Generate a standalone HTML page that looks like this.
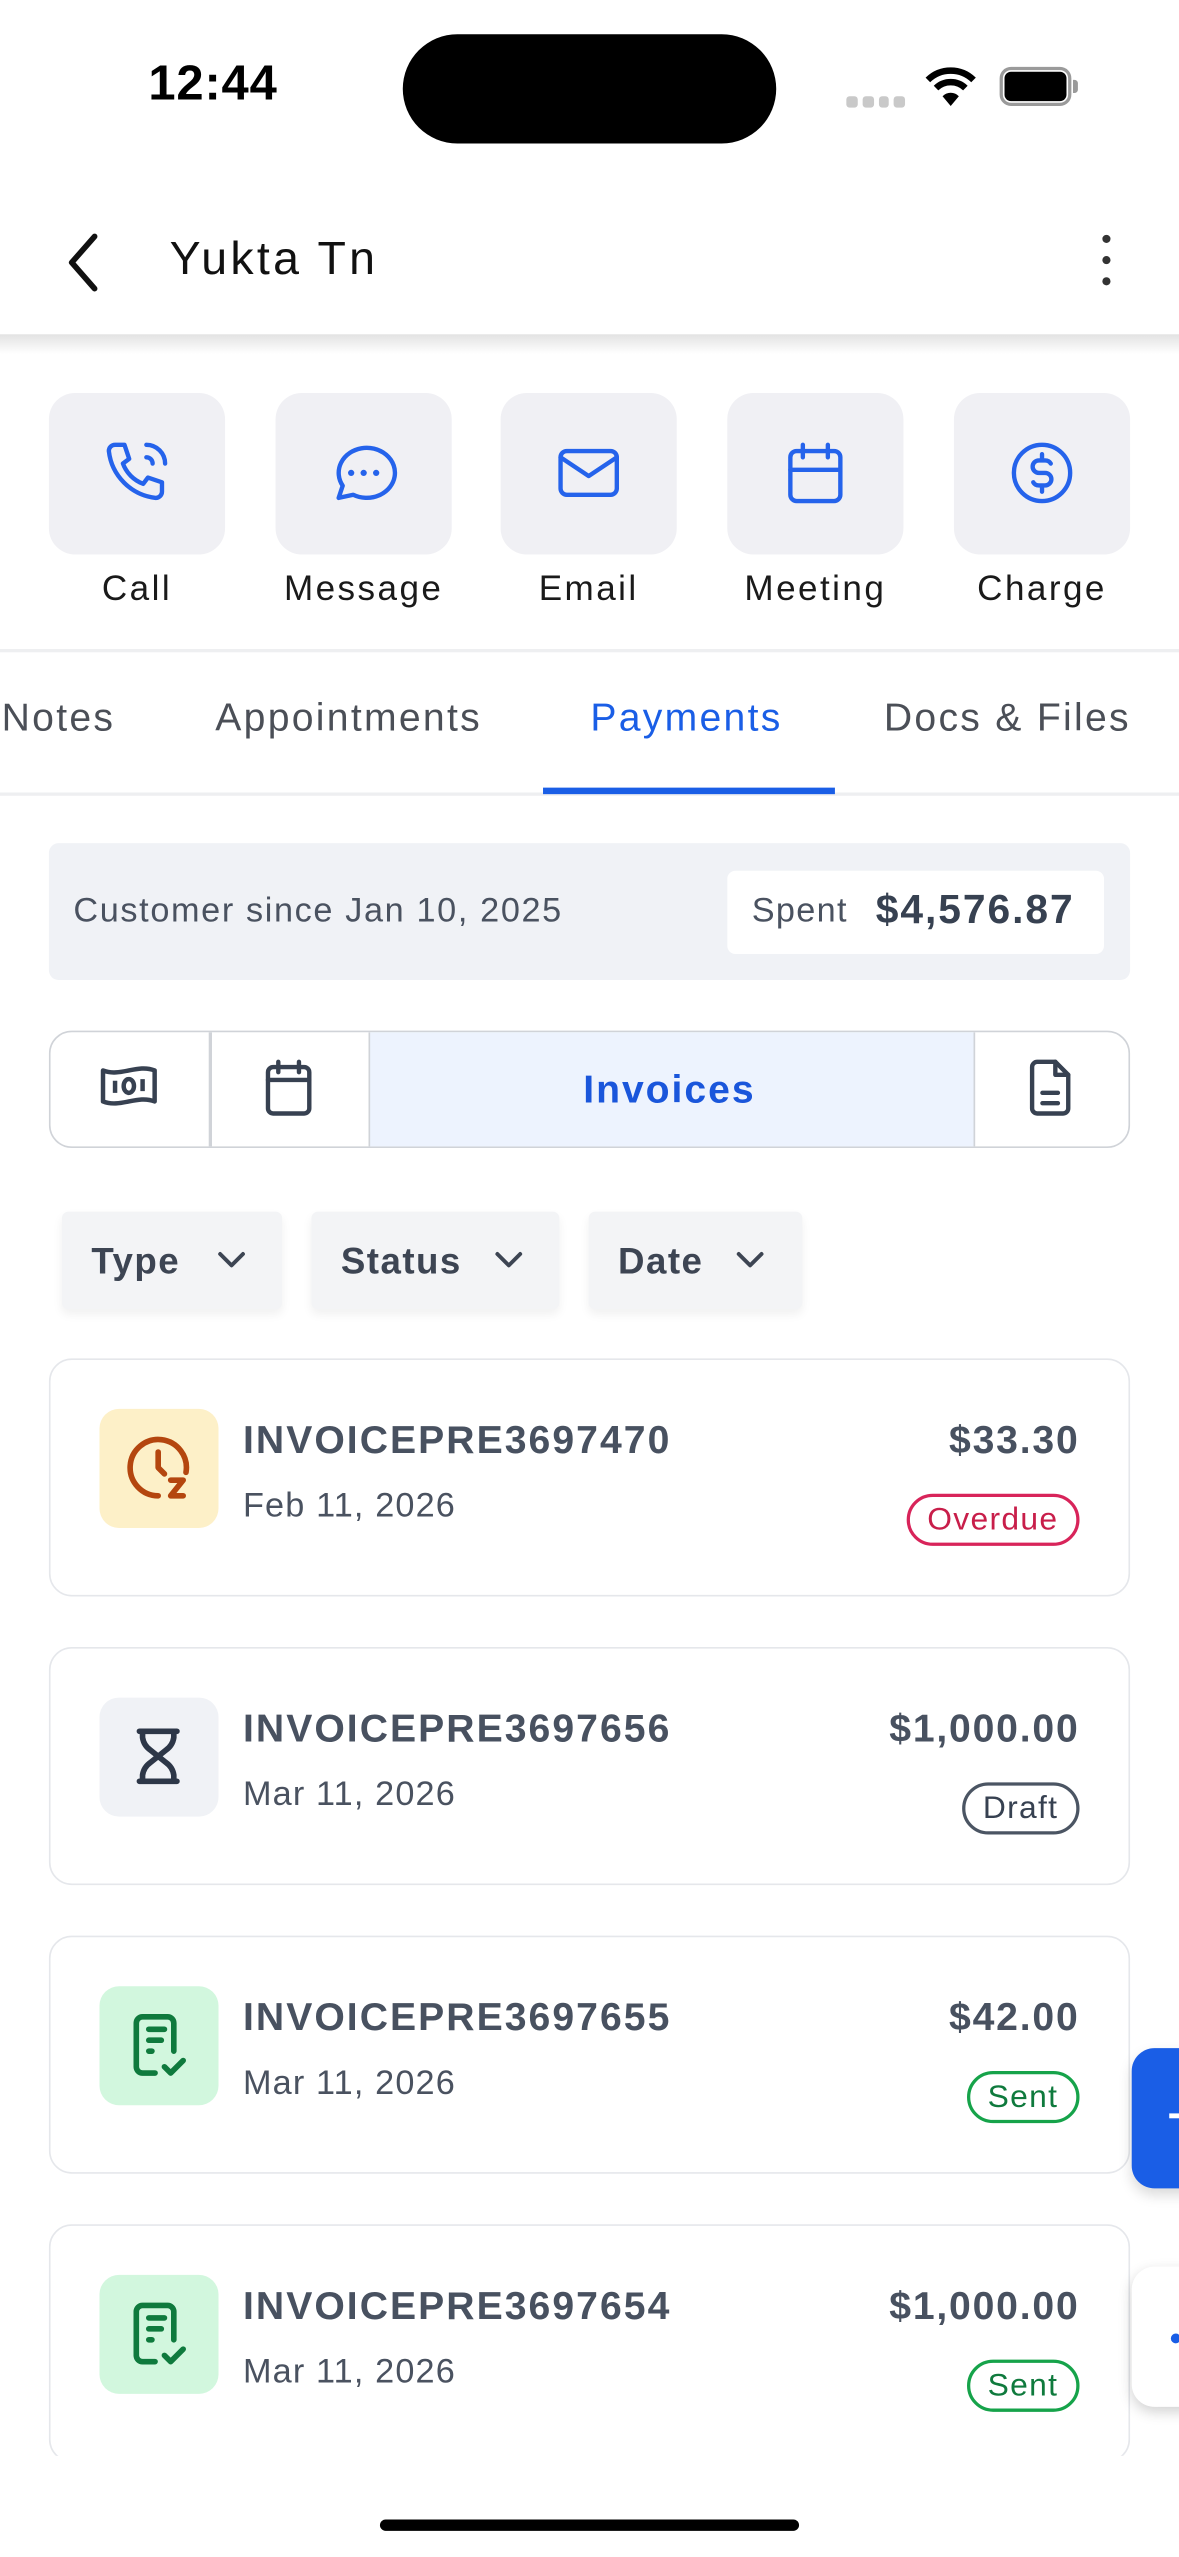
<!DOCTYPE html>
<html><head><meta charset="utf-8">
<style>
html,body{margin:0;padding:0;background:#fff;overflow:hidden;width:1179px;height:2556px}
#w{position:absolute;left:0;top:0;width:723px;height:1568px;transform:scale(1.630705);transform-origin:0 0;font-family:"Liberation Sans",sans-serif;color:#1f2937;overflow:hidden;background:#fff}
.a{position:absolute}
.btn{position:absolute;top:241px;width:108px;height:99px;border-radius:16px;background:#f0f0f4}
.btn svg{position:absolute;left:31px;top:26px}
.lbl{position:absolute;top:349px;width:108px;text-align:center;font-size:21.5px;color:#1a1a1a;letter-spacing:1.5px}
.tab{position:absolute;top:427px;font-size:24px;color:#4b4f57;letter-spacing:1.4px}
.flt{position:absolute;top:743px;height:60px;background:#f3f4f6;border-radius:4px;box-shadow:0 3px 6px rgba(0,0,0,.06);font-weight:bold;font-size:22.5px;color:#3d4553;letter-spacing:.9px}
.flt span{position:absolute;left:18px;top:18px}
.flt svg{position:absolute;top:24px}
.card{position:absolute;left:30px;width:661px;height:144px;border:1.5px solid #e5e7eb;border-radius:14px;background:#fff}
.ic{position:absolute;left:30px;top:30px;width:73px;height:73px;border-radius:12px}
.ic svg{position:absolute;left:13px;top:13px}
.t{position:absolute;left:118px;top:36px;font-size:24px;font-weight:bold;color:#485160;letter-spacing:1.25px}
.d{position:absolute;left:118px;top:78px;font-size:21px;color:#4a5260;letter-spacing:.7px}
.amt{position:absolute;right:30px;top:36px;font-size:24px;font-weight:bold;color:#485160;letter-spacing:1.1px}
.bd{position:absolute;right:30px;top:82px;height:28px;line-height:28px;padding:0 11px;border-radius:16px;font-size:19.5px;border:2px solid;letter-spacing:.8px}
</style></head><body><div id="w">
<!-- status bar -->
<div class="a" style="left:91px;top:35px;font-size:30px;font-weight:bold;color:#000;letter-spacing:.5px">12:44</div>
<div class="a" style="left:247px;top:21px;width:229px;height:67px;border-radius:34px;background:#000"></div>
<div class="a" style="left:519px;top:59px;width:36px;height:7px;display:flex;gap:3px"><i style="flex:1;background:#c9c9c9;border-radius:2px"></i><i style="flex:1;background:#c9c9c9;border-radius:2px"></i><i style="flex:1;background:#c9c9c9;border-radius:2px"></i><i style="flex:1;background:#c9c9c9;border-radius:2px"></i></div>
<svg class="a" style="left:567px;top:40px" width="32" height="26" viewBox="0 0 32 26"><path d="M2 9 A20 20 0 0 1 30 9" stroke="#000" stroke-width="4" fill="none"/><path d="M7 14 A13 13 0 0 1 25 14" stroke="#000" stroke-width="4" fill="none"/><path d="M11 19 L16 25 L21 19 A7 7 0 0 0 11 19Z" fill="#000"/></svg>
<div class="a" style="left:613px;top:41px;width:44px;height:24px;border:2px solid #9a9a9a;border-radius:7px;box-sizing:border-box"></div>
<div class="a" style="left:616px;top:44px;width:38px;height:18px;background:#000;border-radius:4px"></div>
<div class="a" style="left:658px;top:49px;width:3px;height:8px;background:#9a9a9a;border-radius:0 2px 2px 0"></div>
<!-- header -->
<div class="a" style="left:0;top:205px;width:723px;height:12px;background:linear-gradient(#e2e2e2,rgba(255,255,255,0))"></div>
<svg class="a" style="left:36px;top:142px" width="30" height="38" viewBox="0 0 30 38"><path d="M22 3 L8 19 L22 35" stroke="#111" stroke-width="3.5" fill="none" stroke-linecap="round" stroke-linejoin="round"/></svg>
<div class="a" style="left:104px;top:143px;font-size:28.5px;color:#111;letter-spacing:2px">Yukta Tn</div>
<div class="a" style="left:676px;top:144px;width:5px;height:5px;border-radius:50%;background:#333"></div>
<div class="a" style="left:676px;top:157px;width:5px;height:5px;border-radius:50%;background:#333"></div>
<div class="a" style="left:676px;top:170px;width:5px;height:5px;border-radius:50%;background:#333"></div>
<!-- action buttons -->
<div class="btn" style="left:30px"><svg width="46" height="46" viewBox="0 0 24 24" fill="none" stroke="#2563eb" stroke-width="1.4" stroke-linecap="round" stroke-linejoin="round"><path d="M5 3h3l1.5 4.5-2 1.5a11 11 0 0 0 6.5 6.5l1.5-2 4.5 1.5v3a2 2 0 0 1-2 2A17 17 0 0 1 3 5a2 2 0 0 1 2-2"/><path d="M15 7a2 2 0 0 1 2 2M15 3a6 6 0 0 1 6 6"/></svg></div>
<div class="btn" style="left:169px"><svg width="46" height="46" viewBox="0 0 24 24" fill="none" stroke="#2563eb" stroke-width="1.4" stroke-linecap="round" stroke-linejoin="round"><path d="M4 20l1.3-3.9A9 8 0 1 1 8.7 19L4 20"/><path d="M8 12h.01M12 12h.01M16 12h.01" stroke-width="2"/></svg></div>
<div class="btn" style="left:307px"><svg width="46" height="46" viewBox="0 0 24 24" fill="none" stroke="#2563eb" stroke-width="1.4" stroke-linecap="round" stroke-linejoin="round"><rect x="3" y="5" width="18" height="14" rx="2"/><path d="M3 7l9 6 9-6"/></svg></div>
<div class="btn" style="left:446px"><svg width="46" height="46" viewBox="0 0 24 24" fill="none" stroke="#2563eb" stroke-width="1.4" stroke-linecap="round" stroke-linejoin="round"><rect x="4" y="5" width="16" height="16" rx="2"/><path d="M16 3v4M8 3v4M4 11h16"/></svg></div>
<div class="btn" style="left:585px"><svg width="46" height="46" viewBox="0 0 24 24" fill="none" stroke="#2563eb" stroke-width="1.4" stroke-linecap="round" stroke-linejoin="round"><circle cx="12" cy="12" r="9"/><path d="M14.8 9A2 1.8 0 0 0 13 8h-2a2 2 0 0 0 0 4h2a2 2 0 0 1 0 4h-2a2 1.8 0 0 1-1.8-1M12 6v2m0 8v2"/></svg></div>
<div class="lbl" style="left:30px">Call</div>
<div class="lbl" style="left:169px">Message</div>
<div class="lbl" style="left:307px">Email</div>
<div class="lbl" style="left:446px">Meeting</div>
<div class="lbl" style="left:585px">Charge</div>
<div class="a" style="left:0;top:398px;width:723px;height:2px;background:#eeeff1"></div>
<!-- tabs -->
<div class="tab" style="left:1px">Notes</div>
<div class="tab" style="left:132px">Appointments</div>
<div class="tab" style="left:362px;color:#1a5ee6">Payments</div>
<div class="tab" style="left:542px">Docs &amp; Files</div>
<div class="a" style="left:0;top:486px;width:723px;height:2px;background:#eeeff1"></div>
<div class="a" style="left:333px;top:483px;width:179px;height:4px;background:#1a5ee6"></div>
<!-- summary -->
<div class="a" style="left:30px;top:517px;width:663px;height:84px;border-radius:6px;background:#f0f2f6"></div>
<div class="a" style="left:45px;top:547px;font-size:21px;color:#4a5260;letter-spacing:1px">Customer since Jan 10, 2025</div>
<div class="a" style="left:446px;top:534px;width:231px;height:51px;border-radius:5px;background:#fff"></div>
<div class="a" style="left:461px;top:547px;font-size:21px;color:#4a5260;letter-spacing:.8px">Spent</div>
<div class="a" style="left:537px;top:544px;font-size:25px;font-weight:bold;color:#374151;letter-spacing:1.2px">$4,576.87</div>
<!-- segmented -->
<div class="a" style="left:30px;top:632px;width:663px;height:72px;border:1.5px solid #d0d3d8;border-radius:14px;box-sizing:border-box;overflow:hidden">
 <div class="a" style="left:195px;top:0;width:370px;height:72px;background:#edf3fe;border-left:1.5px solid #d0d3d8;border-right:1.5px solid #d0d3d8"></div>
 <div class="a" style="left:97px;top:0;width:1.5px;height:72px;background:#d0d3d8"></div>
</div>
<svg class="a" style="left:60px;top:651px" width="38" height="32" viewBox="0 0 36 30" fill="none" stroke="#374151" stroke-width="2.6" stroke-linejoin="round"><path d="M3 5c10 4 20-4 30 0v18c-10-4-20 4-30 0z"/><path d="M10 11v7M26 10v7"/><ellipse cx="18" cy="14" rx="3" ry="4"/></svg>
<svg class="a" style="left:158px;top:647px" width="38" height="40" viewBox="0 0 24 24" fill="none" stroke="#374151" stroke-width="1.7" stroke-linecap="round" stroke-linejoin="round"><rect x="4" y="4" width="16" height="18" rx="2"/><path d="M16 2v4M8 2v4M4 9h16"/></svg>
<div class="a" style="left:225px;top:655px;width:371px;text-align:center;font-size:24px;font-weight:bold;color:#1a56db;letter-spacing:1.2px">Invoices</div>
<svg class="a" style="left:625px;top:647px" width="38" height="40" viewBox="0 0 24 24" fill="none" stroke="#374151" stroke-width="1.7" stroke-linecap="round" stroke-linejoin="round"><path d="M14 2H7a2 2 0 0 0-2 2v16a2 2 0 0 0 2 2h10a2 2 0 0 0 2-2V7z"/><path d="M14 2v5h5M9 14h6M9 18h6"/></svg>
<!-- filters -->
<div class="flt" style="left:38px;width:135px"><span>Type</span><svg style="left:94px" width="20" height="12" viewBox="0 0 20 12"><path d="M3 2l7 7 7-7" stroke="#3d4553" stroke-width="2.4" fill="none" stroke-linecap="round" stroke-linejoin="round"/></svg></div>
<div class="flt" style="left:191px;width:152px"><span>Status</span><svg style="left:111px" width="20" height="12" viewBox="0 0 20 12"><path d="M3 2l7 7 7-7" stroke="#3d4553" stroke-width="2.4" fill="none" stroke-linecap="round" stroke-linejoin="round"/></svg></div>
<div class="flt" style="left:361px;width:131px"><span>Date</span><svg style="left:89px" width="20" height="12" viewBox="0 0 20 12"><path d="M3 2l7 7 7-7" stroke="#3d4553" stroke-width="2.4" fill="none" stroke-linecap="round" stroke-linejoin="round"/></svg></div>
<!-- cards -->
<div class="card" style="top:833px">
 <div class="ic" style="background:#fdf0c8"><svg width="46" height="46" viewBox="0 0 24 24" fill="none" stroke="#b4460f" stroke-width="1.8" stroke-linecap="round" stroke-linejoin="round"><path d="M20.9 13.5A9 9 0 1 0 12 21"/><path d="M12 7v5l2 2"/><path d="M16 16h4l-4 5h4"/></svg></div>
 <div class="t">INVOICEPRE3697470</div><div class="d">Feb 11, 2026</div>
 <div class="amt">$33.30</div><div class="bd" style="color:#c81e4a;border-color:#d8245a">Overdue</div>
</div>
<div class="card" style="top:1010px">
 <div class="ic" style="background:#f0f2f6"><svg width="46" height="46" viewBox="0 0 24 24" fill="none" stroke="#2d3748" stroke-width="1.8" stroke-linecap="round" stroke-linejoin="round"><path d="M6 20h12M6 4h12M7 20v-2a6 6 0 0 1 2.5-4L12 12l-2.5-2A6 6 0 0 1 7 6V4M17 20v-2a6 6 0 0 0-2.5-4L12 12l2.5-2A6 6 0 0 0 17 6V4"/></svg></div>
 <div class="t">INVOICEPRE3697656</div><div class="d">Mar 11, 2026</div>
 <div class="amt">$1,000.00</div><div class="bd" style="color:#374151;border-color:#4b5563">Draft</div>
</div>
<div class="card" style="top:1187px">
 <div class="ic" style="background:#d2f7de"><svg width="46" height="46" viewBox="0 0 24 24" fill="none" stroke="#0f7a3d" stroke-width="1.8" stroke-linecap="round" stroke-linejoin="round"><path d="M11 21H7a2 2 0 0 1-2-2V5a2 2 0 0 1 2-2h8a2 2 0 0 1 2 2v9"/><path d="M9 7h5M9 10.5h4M9 14h1M14 19l2 2 4-4"/></svg></div>
 <div class="t">INVOICEPRE3697655</div><div class="d">Mar 11, 2026</div>
 <div class="amt">$42.00</div><div class="bd" style="color:#0f7a3d;border-color:#16a34a">Sent</div>
</div>
<div class="card" style="top:1364px">
 <div class="ic" style="background:#d2f7de"><svg width="46" height="46" viewBox="0 0 24 24" fill="none" stroke="#0f7a3d" stroke-width="1.8" stroke-linecap="round" stroke-linejoin="round"><path d="M11 21H7a2 2 0 0 1-2-2V5a2 2 0 0 1 2-2h8a2 2 0 0 1 2 2v9"/><path d="M9 7h5M9 10.5h4M9 14h1M14 19l2 2 4-4"/></svg></div>
 <div class="t">INVOICEPRE3697654</div><div class="d">Mar 11, 2026</div>
 <div class="amt">$1,000.00</div><div class="bd" style="color:#0f7a3d;border-color:#16a34a">Sent</div>
</div>
<div class="a" style="left:0;top:1506px;width:723px;height:62px;background:#fff"></div>
<!-- FABs -->
<div class="a" style="left:694px;top:1256px;width:60px;height:86px;border-radius:14px;background:#1a5ee6;box-shadow:0 4px 8px rgba(0,0,0,.15)"></div>
<div class="a" style="left:717px;top:1296px;width:8px;height:3px;background:#fff"></div>
<div class="a" style="left:694px;top:1390px;width:60px;height:86px;border-radius:14px;background:#fff;box-shadow:0 3px 8px rgba(0,0,0,.18)"></div>
<div class="a" style="left:718px;top:1431px;width:6px;height:6px;border-radius:50%;background:#1a5ee6"></div>
<!-- home indicator -->
<div class="a" style="left:233px;top:1545px;width:257px;height:7px;border-radius:4px;background:#000"></div>
</div></body></html>
